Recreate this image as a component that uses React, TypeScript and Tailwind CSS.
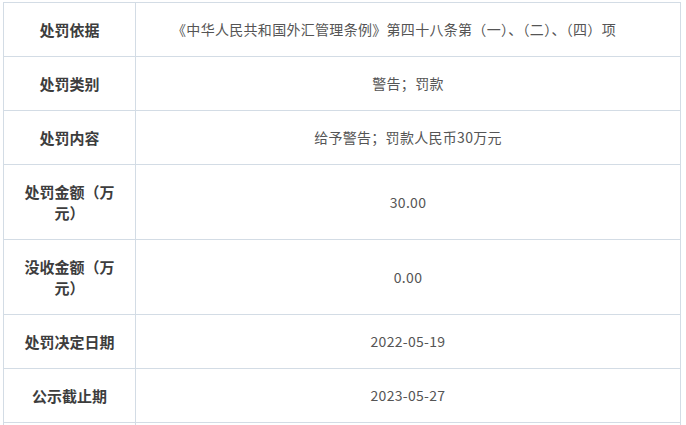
const rows: { label: string; value: string }[] = [
  {
    label: "处罚依据",
    value: "《中华人民共和国外汇管理条例》第四十八条第（一）、（二）、（四）项",
  },
  { label: "处罚类别", value: "警告；罚款" },
  { label: "处罚内容", value: "给予警告；罚款人民币30万元" },
  { label: "处罚金额（万元）", value: "30.00" },
  { label: "没收金额（万元）", value: "0.00" },
  { label: "处罚决定日期", value: "2022-05-19" },
  { label: "公示截止期", value: "2023-05-27" },
  { label: "", value: "" },
];

export default function App() {
  return (
    <div
      className="h-[425px] w-[686px] overflow-hidden bg-white pl-[3px] pt-[2px]"
      style={{ fontFamily: '"Noto Sans CJK SC", "Noto Sans", sans-serif' }}
    >
      <div className="grid w-[678px] grid-cols-[132px_1fr] border-l border-t border-[#d3dce5]">
        {rows.map((row, i) => (
          <div key={i} className="contents">
            <div className="flex items-center justify-center border-b border-r border-[#d3dce5] px-3 py-4 text-center text-[15px] font-bold leading-[21px] text-[#3d3d3d]">
              {row.label}
            </div>
            <div
              className={
                "flex items-center justify-center border-b border-r border-[#d3dce5] py-4 text-center text-[14px] leading-[21px] text-[#555] [letter-spacing:0.3px] " +
                (i === 0 ? "pl-3 pr-[40px]" : "px-3")
              }
            >
              {row.value}
            </div>
          </div>
        ))}
      </div>
    </div>
  );
}
